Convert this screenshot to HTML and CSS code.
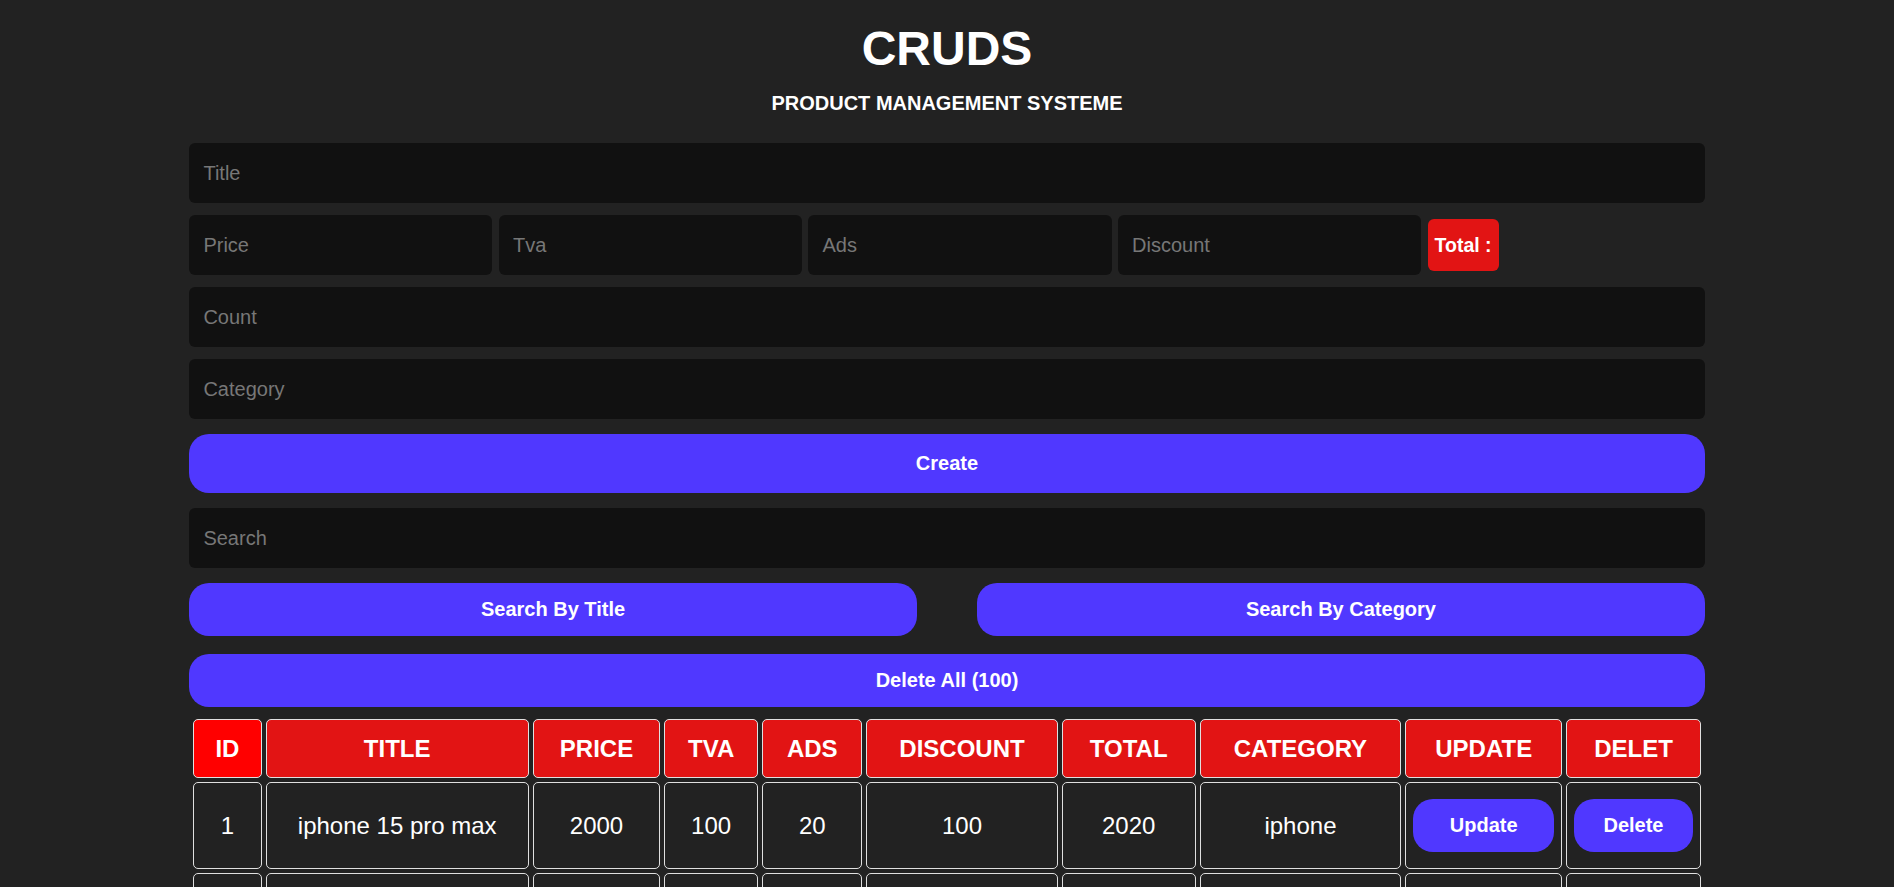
FILE: index.html
```html
<!DOCTYPE html>
<html lang="en">
<head>
<meta charset="UTF-8">
<title>CRUDS</title>
<link rel="stylesheet" href="styles.css">
</head>
<body>
<div class="crud">
  <header class="head">
    <h1>CRUDS</h1>
    <p>PRODUCT MANAGEMENT SYSTEME</p>
  </header>

  <div class="inputs">
    <input type="text" class="field" placeholder="Title">
    <div class="price">
      <input type="number" class="field small" placeholder="Price">
      <input type="number" class="field small" placeholder="Tva">
      <input type="number" class="field small" placeholder="Ads">
      <input type="number" class="field small" placeholder="Discount">
      <small class="total">Total :</small>
    </div>
    <input type="number" class="field" placeholder="Count">
    <input type="text" class="field" placeholder="Category">
  </div>

  <button class="btn btn-create">Create</button>

  <div class="output">
    <input type="text" class="field search" placeholder="Search">
    <div class="btn-search">
      <button class="btn btn-half">Search By Title</button>
      <button class="btn btn-half">Search By Category</button>
    </div>
    <button class="btn btn-delete-all">Delete All (100)</button>

    <table class="products">
      <thead>
        <tr>
          <th class="c-id hover">ID</th>
          <th class="c-title">TITLE</th>
          <th class="c-price">PRICE</th>
          <th class="c-tva">TVA</th>
          <th class="c-ads">ADS</th>
          <th class="c-discount">DISCOUNT</th>
          <th class="c-total">TOTAL</th>
          <th class="c-category">CATEGORY</th>
          <th class="c-update">UPDATE</th>
          <th class="c-delete">DELET</th>
        </tr>
      </thead>
      <tbody>
        <tr>
          <td>1</td>
          <td>iphone 15 pro max</td>
          <td>2000</td>
          <td>100</td>
          <td>20</td>
          <td>100</td>
          <td>2020</td>
          <td>iphone</td>
          <td><button class="btn btn-row">Update</button></td>
          <td><button class="btn btn-row">Delete</button></td>
        </tr>
        <tr>
          <td>2</td>
          <td>iphone 15 pro max</td>
          <td>2000</td>
          <td>100</td>
          <td>20</td>
          <td>100</td>
          <td>2020</td>
          <td>iphone</td>
          <td><button class="btn btn-row">Update</button></td>
          <td><button class="btn btn-row">Delete</button></td>
        </tr>
      </tbody>
    </table>
  </div>
</div>
</body>
</html>
```

FILE: styles.css
```css
* {
  box-sizing: border-box;
}

body {
  margin: 0;
  background: #222222;
  color: #ffffff;
  font-family: "Liberation Sans", Arial, sans-serif;
}

.crud {
  width: 80%;
  margin: 0 auto;
  padding-top: 21px;
}

.head {
  text-align: center;
}

.head h1 {
  margin: 0;
  font-size: 48px;
  line-height: 56px;
  font-weight: bold;
}

.head p {
  margin: 14px 0 0;
  font-size: 20px;
  line-height: 24px;
  font-weight: bold;
}

.inputs {
  margin-top: 28px;
  display: flex;
  flex-direction: column;
  gap: 12px;
}

.field {
  display: block;
  width: 100%;
  height: 60px;
  border: none;
  outline: none;
  background: #111111;
  border-radius: 6px;
  padding: 0 14px;
  color: #ffffff;
  font-family: "Liberation Sans", Arial, sans-serif;
  font-size: 20px;
}

.field::placeholder {
  color: #777777;
}

.price {
  display: flex;
  align-items: center;
  gap: 6.5px;
}

.field.small {
  width: 20%;
  flex: none;
}

.total {
  display: flex;
  align-items: center;
  height: 52px;
  padding: 0 7px;
  background: #e21414;
  border-radius: 6px;
  font-size: 19.5px;
  font-weight: bold;
  color: #ffffff;
}

.btn {
  display: block;
  border: none;
  cursor: pointer;
  background: #5038ff;
  color: #ffffff;
  font-family: "Liberation Sans", Arial, sans-serif;
  font-size: 20px;
  font-weight: bold;
  border-radius: 20px;
}

.btn-create {
  width: 100%;
  height: 59px;
  margin-top: 15px;
}

.output {
  margin-top: 15px;
}

.btn-search {
  margin-top: 15px;
  display: flex;
  justify-content: space-between;
}

.btn-half {
  width: 48%;
  height: 53px;
}

.btn-delete-all {
  width: 100%;
  height: 53px;
  margin-top: 18px;
}

.products {
  width: 100%;
  margin-top: 8px;
  table-layout: fixed;
  border-collapse: separate;
  border-spacing: 4px;
  text-align: center;
}

.products th,
.products td {
  border: 1px solid #e0e0e0;
  border-radius: 5px;
  font-size: 24px;
  line-height: 27px;
}

.products th {
  background: #e21414;
  font-weight: bold;
  padding: 15px 8px;
}

.products th.hover {
  background: #ff0000;
}

.products td {
  padding: 16px 7px 16px;
  font-weight: normal;
}

.c-id { width: 68px; }
.c-title { width: 263px; }
.c-price { width: 127px; }
.c-tva { width: 94px; }
.c-ads { width: 100px; }
.c-discount { width: 191px; }
.c-total { width: 134px; }
.c-category { width: 201px; }
.c-update { width: 157px; }
.c-delete { width: 134px; }

.btn-row {
  width: 100%;
  height: 53px;
}
```
